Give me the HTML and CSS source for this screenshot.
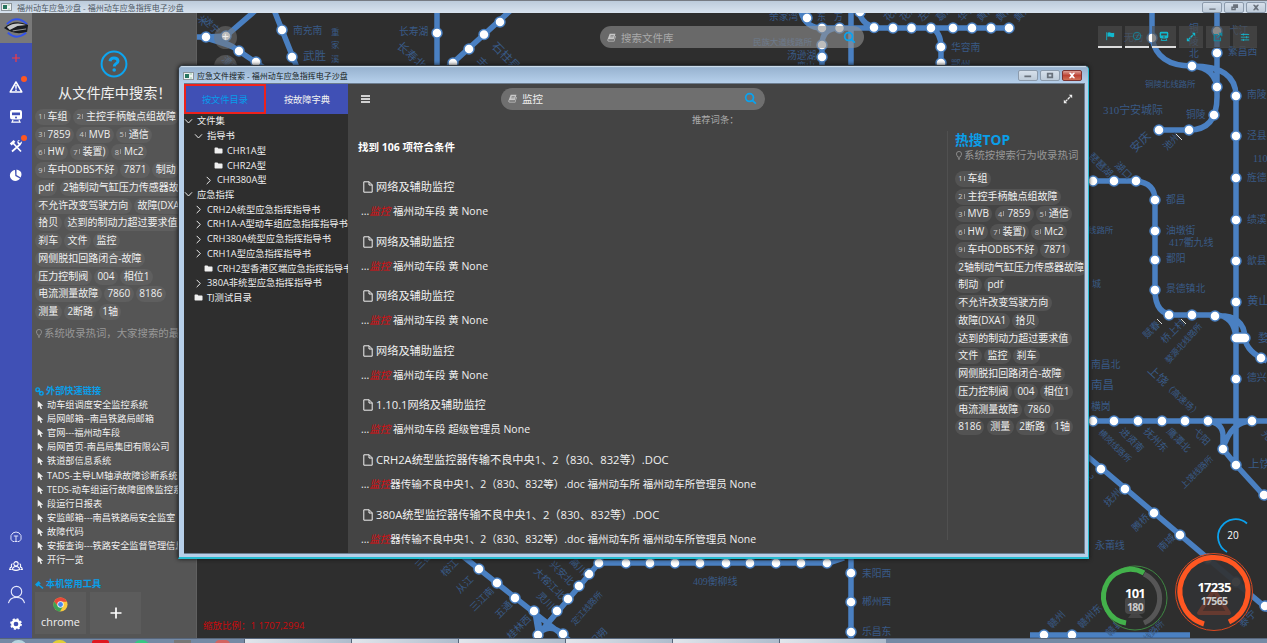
FILE: index.html
```html
<!DOCTYPE html>
<html lang="en">
<head>
<meta charset="utf-8">
<title>福州动车应急沙盘</title>
<link rel="stylesheet" href="styles.css">
</head>
<body>
<svg class="defs" width="0" height="0">
  <symbol id="bulb" viewBox="0 0 10 12"><path d="M3.4 8.2C3.2 7 1.6 6 1.6 4a3.4 3.4 0 0 1 6.8 0c0 2-1.6 3-1.8 4.200zM3.600 9.800h2.800M4.200 11.300h1.600" fill="none" stroke="currentColor" stroke-width="1.100"/></symbol>
  <symbol id="doc" viewBox="0 0 10 12"><path d="M.8.8h5.400l3 3v7.400H.8zM6 .8V4h3.200" fill="none" stroke="currentColor" stroke-width="1"/></symbol>
  <symbol id="down" viewBox="0 0 10 8"><path d="M1 1.500l4 4.200 4-4.200" fill="none" stroke="currentColor" stroke-width="1.100"/></symbol>
  <symbol id="right" viewBox="0 0 8 10"><path d="M2 1l4 4-4 4" fill="none" stroke="currentColor" stroke-width="1.100"/></symbol>
  <symbol id="folder" viewBox="0 0 10 8"><path d="M.5 1.500q0-.8.8-.8h2.500l1 1.100h4q.8 0 .8.8v3.900q0 .8-.8.8H1.300q-.8 0-.8-.8z" fill="currentColor"/></symbol>
  <symbol id="cursor" viewBox="0 0 8 11"><path d="M.8.5v8.200l2-1.800 1.500 3.400 1.500-.7-1.500-3.200h2.900z" fill="currentColor"/></symbol>
  <symbol id="glass" viewBox="0 0 14 14"><g fill="none" stroke="currentColor" stroke-width="1.900"><circle cx="6" cy="6" r="4.200"/><path d="M9 9l3.800 3.500"/></g></symbol>
  <symbol id="book" viewBox="0 0 10 10"><path d="M3 .8h6.400L7.500 7H1.500q-.8 1.300.4 1.500h5.700l1.600-5.200.7.400-1.800 5.800H1.500Q0 9 .6 7.200z" fill="currentColor"/><path d="M4 2.800h3.500M3.600 4.300h3.500" stroke="#6d6d6d" stroke-width=".7"/></symbol>
  <symbol id="expand" viewBox="0 0 12 12"><path d="M3 9l6-6" stroke="currentColor" stroke-width="1.600" stroke-dasharray="3.200 .7"/><path d="M7 1h4v4zM1 7v4h4z" fill="currentColor"/></symbol>
  <symbol id="app" viewBox="0 0 11 8"><rect x=".5" y=".5" width="10" height="7" fill="#eef2f2" stroke="#8c969d"/><path d="M2 2h4v4H2z" fill="#27755f"/><path d="M6.500 2h2.500M7 6h2" stroke="#9ca"/></symbol>
  <symbol id="train" viewBox="0 0 14 14"><path d="M3 1h8q2 0 2 2v5q0 2.500-2.500 2.500h-7Q1 10.500 1 8V3q0-2 2-2z" fill="currentColor"/><path d="M3 3.500h8v2.700H3z" fill="var(--hole,#4050b5)"/><circle cx="7" cy="8.400" r="1" fill="var(--hole,#4050b5)"/><path d="M4 11l-1 2.200h8L10 11" fill="none" stroke="currentColor" stroke-width="1.200"/></symbol>
</svg>

<header class="titlebar">
  <svg class="app-icon"><use href="#app"/></svg>
  <span>福州动车应急沙盘 - 福州动车应急指挥电子沙盘</span>
  <div class="win-btns">
    <svg viewBox="0 0 20 10"><path d="M7 6h7v1.500H7z"/></svg>
    <svg viewBox="0 0 20 10"><path d="M9 1.500h5.500v4H12V8H7V4h2zM8.500 5.500v1h2v-1z"/></svg>
    <svg viewBox="0 0 20 10"><path d="M6.500 2h2.300l1.200 1.300L11.200 2h2.300l-2.300 3 2.300 3h-2.300L10 6.700 8.800 8H6.500l2.300-3z"/></svg>
  </div>
</header>

<main class="desk">
  <nav class="rail">
    <div class="logo"><svg viewBox="0 0 28 22"><path d="M4 7Q14-3 25 7M5 16q9 8 19 0" fill="none" stroke="#3454ea" stroke-width="2"/><path d="M1 11Q12 1 26 8l-1 7q-13 4-24-4z" fill="#191c20"/><path d="M4 10Q13 4 24 8l-9 1-8 4z" fill="#c5c7c8"/><path d="M10 14l14-2" stroke="#999"/></svg></div>
    <div class="slot"><svg viewBox="0 0 14 14"><path d="M7 3v8M3 7h8" stroke="#f33b45" stroke-width="1.200"/></svg></div>
    <div class="slot"><svg viewBox="0 0 14 14"><path d="M7 2L1.200 12h11.600z" fill="none" stroke="#fff" stroke-width="1.500" stroke-linejoin="round"/><path d="M7 5v3.800M7 9.500v1.400" stroke="#fff" stroke-width="1.500"/></svg><i class="dot"></i></div>
    <div class="slot"><svg><use href="#train"/></svg></div>
    <div class="slot"><svg viewBox="0 0 14 14"><path d="M4 4l8 8.500M11.500 5L3 12.500" stroke="#fff" stroke-width="1.700"/><path d="M.8 4.500L4.600 1l1.800 1.800-3.800 3.600z" fill="#fff"/><path d="M12.800 2.200l-2 2-1.600-1.600 1.700-1.600Q8.500.6 8.300 3q.2 2.800 2.700 2.700 2.300-.7 1.800-3.500z" fill="#fff"/></svg><i class="dot"></i></div>
    <div class="slot"><svg viewBox="0 0 14 14"><path d="M6 2a5.500 5.500 0 1 0 5 8.500L6.300 8z" fill="#fff"/><path d="M7.500 1.500V7l4.200 2.500Q14.500 3 7.500 1.500z" fill="#fff"/></svg></div>
    <div class="spacer"></div>
    <div class="slot low"><svg viewBox="0 0 14 14"><path d="M5 11.500H3.800Q1 10 2 5.500 3.500 2 7 2t5 3.500q1 4.500-1.800 6H9M4.800 6h4.400M7 6v5M5.500 11.500h3" fill="none" stroke="#dfe2fb"/></svg></div>
    <div class="slot low"><svg viewBox="0 0 16 14"><g fill="none" stroke="#fff" stroke-width="1.200"><circle cx="8" cy="4.500" r="2.500"/><path d="M4 11q0-3.500 4-3.500t4 3.500q-4 2-8 0zM4 4.500Q2 5 3 8q-2 .5-2.300 3H3M12 4.500q2 .5 1 3.500 2 .5 2.300 3H13"/></g></svg></div>
    <div class="slot low"><svg class="big" viewBox="0 0 20 20"><g fill="none" stroke="#e5e7fb" stroke-width="1.200"><circle cx="10" cy="7" r="5.500"/><path d="M1.500 19q1.500-6 8.500-6t8.500 6"/></g></svg></div>
    <div class="slot low"><svg viewBox="0 0 14 14"><circle cx="7" cy="7" r="3.600" fill="none" stroke="#fff" stroke-width="2.500"/><circle cx="7" cy="7" r="5" fill="none" stroke="#fff" stroke-width="1.800" stroke-dasharray="2 1.930"/></svg></div>
  </nav>

  <aside class="side">
    <div class="ask"><svg viewBox="0 0 28 28"><circle cx="14" cy="14" r="12.400" fill="none" stroke="#0da5f0" stroke-width="2"/><path d="M10 11.200q.4-3.200 4-3.200t4 2.900q0 1.800-2 2.900-1.700.9-1.700 2.700" fill="none" stroke="#0da5f0" stroke-width="3"/><circle cx="14.200" cy="20" r="1.800" fill="#0da5f0"/></svg></div>
    <h1>从文件库中搜索！</h1>
    <div class="tags">
      <p><b><i>1</i>车组</b><b><i>2</i>主控手柄触点组故障</b></p>
      <p><b><i>3</i>7859</b><b><i>4</i>MVB</b><b><i>5</i>通信</b></p>
      <p><b><i>6</i>HW</b><b><i>7</i>装置)</b><b><i>8</i>Mc2</b></p>
      <p><b><i>9</i>车中ODBS不好</b><b>7871</b><b>制动</b></p>
      <p><b>pdf</b><b>2轴制动气缸压力传感器故障</b></p>
      <p><b>不允许改变驾驶方向</b><b>故障(DXA1</b></p>
      <p><b>拾贝</b><b>达到的制动力超过要求值</b></p>
      <p><b>刹车</b><b>文件</b><b>监控</b></p>
      <p><b>网侧脱扣回路闭合-故障</b></p>
      <p><b>压力控制阀</b><b>004</b><b>相位1</b></p>
      <p><b>电流测量故障</b><b>7860</b><b>8186</b></p>
      <p><b>测量</b><b>2断路</b><b>1轴</b></p>
    </div>
    <div class="hint"><svg><use href="#bulb"/></svg>系统收录热词，大家搜索的最多</div>
    <h2 class="links-title"><svg viewBox="0 0 10 10"><g fill="none" stroke="currentColor" stroke-width="1.600"><circle cx="3" cy="3" r="2"/><circle cx="7" cy="7" r="2"/><path d="M3.500 3.500l3 3"/></g></svg>外部快速链接</h2>
    <ul class="links">
      <li><svg><use href="#cursor"/></svg>动车组调度安全监控系统</li>
      <li><svg><use href="#cursor"/></svg>局网邮箱--南昌铁路局邮箱</li>
      <li><svg><use href="#cursor"/></svg>官网---福州动车段</li>
      <li><svg><use href="#cursor"/></svg>局网首页-南昌局集团有限公司</li>
      <li><svg><use href="#cursor"/></svg>铁道部信息系统</li>
      <li><svg><use href="#cursor"/></svg>TADS-主导LM轴承故障诊断系统</li>
      <li><svg><use href="#cursor"/></svg>TEDS-动车组运行故障图像监控系</li>
      <li><svg><use href="#cursor"/></svg>段运行日报表</li>
      <li><svg><use href="#cursor"/></svg>安监邮箱---南昌铁路局安全监室</li>
      <li><svg><use href="#cursor"/></svg>故障代码</li>
      <li><svg><use href="#cursor"/></svg>安报查询---铁路安全监督管理信息</li>
      <li><svg><use href="#cursor"/></svg>开行一览</li>
    </ul>
    <h2 class="tools-title"><svg viewBox="0 0 10 10"><path d="M0 5l4-4 2.500 3L4.800 5l4.700 3.500L8.300 10 4 6.200 2.500 7.500z" fill="currentColor"/></svg>本机常用工具</h2>
    <div class="tiles">
      <div class="tile"><svg viewBox="0 0 16 16"><circle cx="8" cy="8" r="7.500" fill="#fbc93d"/><path d="M1.200 4.700A7.500 7.500 0 0 1 14.800 5H8L5 9.500z" fill="#e8473a"/><path d="M1.300 4.700Q-1 9 2 12.500q2 2.800 5.500 3L10.500 10 5 9.500z" fill="#3da255"/><circle cx="8" cy="8" r="3.400" fill="#f5f5f5"/><circle cx="8" cy="8" r="2.600" fill="#4688ee"/></svg><span>chrome</span></div>
      <div class="tile"><svg class="plus" viewBox="0 0 12 12"><path d="M6 .5v11M.5 6h11" stroke="#fff" stroke-width="1.700"/></svg></div>
    </div>
  </aside>

  <section class="map">
    <svg class="lines" viewBox="197 13 1070 625">
      <defs>
        <path id="stations" d="M206 37h0M226 36h0M239 51h0M256 62h0M282 30h0M292 57h0M437 33h0M500 22h0M484 34.500h0M469 49h0M453 63h0M807 18h0M822 28h0M839.500 28h0M822 45h0M822 57h0M860 12h0M874 27.500h0M893 28h0M911.500 28h0M931 28h0M953 28h0M972 28h0M991 28h0M1009 28h0M941 47h0M941 63h0M1152 38h0M1217 31h0M1217 53h0M1192 66h0M1217 87h0M1236 96h0M1214 115h0M1189 130h0M1159 130h0M1236 136h0M1236 178h0M1093 181h0M1114 181h0M1136 181h0M1155 200h0M1155 231h0M1155 260h0M1155 290h0M1169 315h0M1192 315h0M1215 316h0M1236 220h0M1236 261h0M1236 302h0M1236 338h9M1261 358h0M1093 421h0M1114 421h0M1138 421h0M1162 421h0M1185 421h0M1208 421h0M1252 421h0M1236 379h0M1223 449h0M1236 465h0M1264 495h0M1101 469h0M1125 489h0M1154 513h0M1180 535h0M1208 559h0M1236 582h0M1265 606h0M479 569h0M497 583h0M515 598h0M534 611h0M538 635h0M563 634h0M557 611h0M568 599h0M579 586h0M589 574h0M599 563h0M626 563h0M650 563h0M675 563h0M700 563h0M726 563h0M750 563h0M776 563h0M801 563h0M827 563h0M851 573h0M851 602h0M851 632h0M1044 635h0M1072 635h0"/>
      </defs>
      <path class="track" d="M197 37h9l20-1L256 10M206 37q20 4 33 14l34 23M274 10l28 70M437 10v70M511 10L445 70M800 8q4 20 22 20h24M822 80V45q0-17 17-17h170M851 10v60M858 8q3 18 20 20M931 28q10 4 10 19v30M1152 10v28q5 28 40 28 44 0 44 30v369l31 34M1217 10v87q0 33-28 33h-30M1192 66q25 2 25 25M1080 181h56q19 2 19 19v90q0 25 20 25h40q19 0 21 23M1215 316q30-2 30 23 2 13 22 22M1080 421h187M1208 421q15 2 15 15v13l13 16M1223 449q8-28 29-28M1080 450l191 162M455 550l115 91M538 640q4-18-4-29M563 634q-15-12-25 1M538 635l61-72h230l15-5M851 555v83M1030 635h160"/>
      <path class="track inner" d="M200 37q18 5 34 11M534 611l4 24 19-24"/>
      <use href="#stations" class="halo"/><use href="#stations" class="stop"/>
      <g class="names">
        <text x="293" y="34">南充南</text><text x="303" y="60" class="l">武胜</text><text x="399" y="35">长寿湖</text><text transform="translate(202 21) rotate(45)">遂宁</text><text transform="translate(197 18) rotate(60)">米</text>
        <g class="kai"><text x="331" y="35">重</text><text x="331" y="48">家</text><text x="331" y="62">溪</text></g>
        <text transform="translate(396 47) rotate(42)" class="l">长寿北</text><text transform="translate(491 47) rotate(45)" class="l">石柱县</text><text transform="translate(475 62) rotate(45)" class="l">丰都</text><text transform="translate(221 60) rotate(45)">潼南</text>
        <text x="769" y="20">余家湾</text><text x="817" y="20" class="s">东</text><text x="834" y="20" class="s">方</text><text x="753" y="45" class="kai">民族大道线路所</text><text x="787" y="59">汤逊湖</text><text x="797" y="69" class="s">鹿山</text>
        <text transform="translate(888 22) rotate(-45)">花山</text><text transform="translate(904 22) rotate(-45)">花湖</text><text transform="translate(922 22) rotate(-45)">左岭</text><text transform="translate(940 22) rotate(-45)">葛店</text><text transform="translate(962 22) rotate(-45)">华容</text><text transform="translate(981 22) rotate(-45)">黄冈</text><text transform="translate(1000 22) rotate(-45)">黄冈西</text><text transform="translate(1018 22) rotate(-45)">黄州</text>
        <text x="951" y="51">华容南</text><text x="951" y="68">鄂州</text>
        <text x="1124" y="41">无为</text><text x="1189" y="32">铜</text><text x="1189" y="45">陵</text><text x="1189" y="57">北</text><text x="1229" y="34">弋江</text><text x="1228" y="55">繁昌西</text><text x="1145" y="87" class="kai">铜陵北线路所</text><text x="1103" y="114" class="kai xl">310宁安城际</text><text x="1186" y="118">铜陵</text><text x="1247" y="98">南陵</text><text x="1247" y="139">泾县</text><text x="1253" y="162" class="kai l">110</text><text x="1247" y="181">旌德</text>
        <text transform="translate(1135 153) rotate(-45)" class="l">安庆</text><text transform="translate(1167 151) rotate(-45)">池州</text><text transform="translate(1088 157) rotate(45)">琵琶湖</text><text transform="translate(1114 166) rotate(45)">湖口</text>
        <text x="1166" y="203">都昌</text><text x="1166" y="234">油墩街</text><text x="1169" y="246" class="kai l">417衢九线</text><text x="1166" y="262">鄱阳</text><text x="1166" y="292">景德镇北</text><text x="1088" y="233" class="kai">线路所</text><text x="1092" y="287" class="s">城</text><text x="1247" y="223">绩溪</text><text x="1247" y="264">歙县</text><text x="1247" y="305" class="l">黄山</text><text x="1258" y="342" class="l">婺</text>
        <text transform="translate(1147 339) rotate(-45)">赋春</text><text transform="translate(1165 344) rotate(-45)">桥上村</text><text transform="translate(1169 364) rotate(-48)" class="kai">婺源北线路所</text>
        <text x="1091" y="368">南昌北</text><text x="1091" y="389" class="l">南昌</text><text x="1091" y="410">横岗</text><text transform="translate(1147 371) rotate(43)" class="l">上饶<tspan class="n">（高速场）</tspan></text><text x="1247" y="381">德兴</text>
        <text transform="translate(1098 433) rotate(45)" class="kai">横岗线路所</text><text transform="translate(1119 432) rotate(45)">进贤南</text><text transform="translate(1143 432) rotate(45)">抚州东</text><text transform="translate(1166 432) rotate(45)">鹰潭北</text><text transform="translate(1192 432) rotate(45)">弋阳</text><text transform="translate(1184 489) rotate(-45)" class="kai">上饶线路所</text><text x="1248" y="468" class="l">上饶</text><text transform="translate(1261 434) rotate(45)">光</text>
        <text transform="translate(1108 507) rotate(-45)">抚州</text><text transform="translate(1136 532) rotate(-45)">腾桥</text><text transform="translate(1162 552) rotate(-45)">南城</text><text x="1095" y="549" class="kai l">永莆线</text><text transform="translate(1243 628) rotate(-45)">泰宁</text><text transform="translate(1087 483) rotate(-45)">北</text>
        <text transform="translate(1052 629) rotate(-45)">赣州</text><text transform="translate(1082 629) rotate(-45)">赣州东</text><text transform="translate(1110 637) rotate(-45)">赣县</text><text transform="translate(1147 642) rotate(-45)" class="kai">线路所</text>
        <text x="862" y="577">耒阳西</text><text x="862" y="605">郴州西</text><text x="862" y="635">乐昌东</text><text x="693" y="585" class="kai l">409衡柳线</text>
        <text transform="translate(419 570) rotate(-45)">三都</text><text transform="translate(445 577) rotate(-45)">榕江</text><text transform="translate(460 594) rotate(-45)">从江</text><text transform="translate(474 612) rotate(-45)">三江南</text><text transform="translate(499 619) rotate(-45)">五通</text><text transform="translate(511 640) rotate(-45)">桂林西</text><text transform="translate(569 562) rotate(45)">高川</text><text transform="translate(549 565) rotate(45)">兴安北</text><text transform="translate(533 572) rotate(45)">大榕江北</text><text transform="translate(536 596) rotate(45)">灵川</text><text transform="translate(575 626) rotate(-48)" class="kai">定江线路所</text><text transform="translate(594 646) rotate(-45)">阳朔</text>
      </g>
      <path d="M1176 134l6 6M1157 319l5 5M1181 319l5 5" stroke="#ddd"/>
      <text x="203" y="629" class="scale">缩放比例：1 1707,2994</text>
    </svg>

    <div class="zoom-pad"><i>+</i><i>−</i></div>
    <div class="field outer"><svg class="bk"><use href="#book"/></svg><span>搜索文件库</span><svg class="gl"><use href="#glass"/></svg></div>
    <div class="toolbar">
      <div class="on"><svg viewBox="0 0 12 12"><path d="M2 1.500v9.500" stroke="currentColor"/><path d="M3 2q2-1 4 0t4 0v5Q9 8 7 7T3 7z" fill="currentColor"/></svg></div>
      <div class="on dim"><svg viewBox="0 0 12 12"><g fill="none" stroke="currentColor"><circle cx="6" cy="6" r="4.500"/><path d="M5 8.500L8 4M4 10h4"/></g></svg></div>
      <div class="on"><svg class="tr"><use href="#train"/></svg></div>
      <div><svg><use href="#expand"/></svg></div>
      <div class="dim"><svg viewBox="0 0 12 12"><path d="M9 6.500V10.500H1.500V3H6M5 7l5-5M7 1.500h3.500V5" fill="none" stroke="currentColor" stroke-width="1.400"/></svg></div>
      <div><svg viewBox="0 0 12 12"><path d="M1 3h10M1 6.200h10M1 9.500h10M4 1.700v2.600M8 5v2.600M4 8.200v2.600" fill="none" stroke="currentColor"/></svg></div>
    </div>
    <svg class="dials" viewBox="1095 510 165 125">
      <path d="M1247 523.500A17.500 17.500 0 1 0 1227 552" fill="none" stroke="#0ba2ee" stroke-width="1.800"/>
      <text x="1233" y="539" class="d20">20</text>
      <circle cx="1135" cy="598" r="32" fill="#2d2e2d" fill-opacity=".92" stroke="#3f8843"/><path d="M1144 623A27 27 0 0 0 1144 574" fill="none" stroke="#565656" stroke-width="5"/><path d="M1126 623A27 27 0 1 1 1144 573" fill="none" stroke="#43b14b" stroke-width="5"/>
      <rect x="1125" y="597" width="20" height="17" rx="4" fill="#484848"/><path d="M1131 614l-3 4h15l-4-4" fill="#444"/>
      <text x="1135" y="598" class="big">101</text><text x="1135" y="611" class="small">180</text>
      <circle cx="1214" cy="592" r="38.500" fill="#323335" fill-opacity=".94" stroke="#d84820"/><path d="M1204 624A34 34 0 1 1 1229 622" fill="none" stroke="#ff5722" stroke-width="5"/>
      <path d="M1214 590l15 23h-30z" fill="#46312c" stroke="#653a30" stroke-width="4" stroke-linejoin="round"/>
      <text x="1214" y="592" class="big">17235</text><text x="1214" y="605" class="small">17565</text>
    </svg>
  </section>
</main>

<footer class="taskbar"><i class="orb"></i><i class="y"></i><i class="r"></i><i class="g"></i><i class="k"></i><i class="r small"></i><div class="tabs"><b></b><b></b><b></b><b></b><b></b><b></b></div><span></span></footer>

<section class="window">
  <header class="win-title">
    <svg class="app-icon"><use href="#app"/></svg>
    <span>应急文件搜索 - 福州动车应急指挥电子沙盘</span>
    <div class="win-btns">
      <svg viewBox="0 0 20 10"><path d="M6 5h7.500v2H6z"/></svg>
      <svg viewBox="0 0 20 10"><path d="M6.500 2h7v6h-7zM8.500 4v2h3V4z" fill-rule="evenodd"/></svg>
      <svg class="close" viewBox="0 0 20 10"><path d="M6.500 2h2.300l1.200 1.300L11.200 2h2.300l-2.300 3 2.300 3h-2.300L10 6.700 8.800 8H6.500l2.300-3z"/></svg>
    </div>
  </header>
  <div class="win-body">
    <div class="tree">
      <div class="tree-tabs"><span class="active">按文件目录</span><span>按故障字典</span></div>
      <ul>
        <li><svg class="dn"><use href="#down"/></svg>文件集</li>
        <li class="l1"><svg class="dn"><use href="#down"/></svg>指导书</li>
        <li class="l3"><svg class="fd"><use href="#folder"/></svg>CHR1A型</li>
        <li class="l3"><svg class="fd"><use href="#folder"/></svg>CHR2A型</li>
        <li class="l2"><svg class="rt"><use href="#right"/></svg>CHR380A型</li>
        <li><svg class="dn"><use href="#down"/></svg>应急指挥</li>
        <li class="l1"><svg class="rt"><use href="#right"/></svg>CRH2A统型应急指挥指导书</li>
        <li class="l1"><svg class="rt"><use href="#right"/></svg>CRH1A-A型动车组应急指挥指导书</li>
        <li class="l1"><svg class="rt"><use href="#right"/></svg>CRH380A统型应急指挥指导书</li>
        <li class="l1"><svg class="rt"><use href="#right"/></svg>CRH1A型应急指挥指导书</li>
        <li class="l2"><svg class="fd"><use href="#folder"/></svg>CRH2型香港区端应急指挥指导书</li>
        <li class="l1"><svg class="rt"><use href="#right"/></svg>380A非统型应急指挥指导书</li>
        <li class="l1"><svg class="fd"><use href="#folder"/></svg>TJ测试目录</li>
      </ul>
    </div>
    <div class="content">
      <div class="searchbar">
        <svg class="menu" viewBox="0 0 9 8"><path d="M0 1h9M0 4h9M0 7h9" stroke="#fff" stroke-width="1.300"/></svg>
        <div class="field"><svg class="bk"><use href="#book"/></svg><span>监控</span><svg class="gl"><use href="#glass"/></svg></div>
        <svg class="exp"><use href="#expand"/></svg>
      </div>
      <div class="suggest">推荐词条：</div>
      <div class="columns">
        <div class="results">
          <h3>找到 106 项符合条件</h3>
          <article><h4><svg><use href="#doc"/></svg>网络及辅助监控</h4><p>...<em>监控</em> 福州动车段 黄 None</p></article>
          <article><h4><svg><use href="#doc"/></svg>网络及辅助监控</h4><p>...<em>监控</em> 福州动车段 黄 None</p></article>
          <article><h4><svg><use href="#doc"/></svg>网络及辅助监控</h4><p>...<em>监控</em> 福州动车段 黄 None</p></article>
          <article><h4><svg><use href="#doc"/></svg>网络及辅助监控</h4><p>...<em>监控</em> 福州动车段 黄 None</p></article>
          <article><h4><svg><use href="#doc"/></svg>1.10.1网络及辅助监控</h4><p>...<em>监控</em> 福州动车段 超级管理员 None</p></article>
          <article><h4><svg><use href="#doc"/></svg>CRH2A统型监控器传输不良中央1、2（830、832等）.DOC</h4><p>...<em>监控</em>器传输不良中央1、2（830、832等）.doc 福州动车所 福州动车所管理员 None</p></article>
          <article><h4><svg><use href="#doc"/></svg>380A统型监控器传输不良中央1、2（830、832等）.DOC</h4><p>...<em>监控</em>器传输不良中央1、2（830、832等）.doc 福州动车所 福州动车所管理员 None</p></article>
        </div>
        <div class="hot">
          <h2>热搜TOP</h2>
          <div class="hint"><svg><use href="#bulb"/></svg>系统按搜索行为收录热词</div>
          <div class="tags">
            <p><b><i>1</i>车组</b></p>
            <p><b><i>2</i>主控手柄触点组故障</b></p>
            <p><b><i>3</i>MVB</b><b><i>4</i>7859</b><b><i>5</i>通信</b></p>
            <p><b><i>6</i>HW</b><b><i>7</i>装置)</b><b><i>8</i>Mc2</b></p>
            <p><b><i>9</i>车中ODBS不好</b><b>7871</b></p>
            <p><b>2轴制动气缸压力传感器故障</b></p>
            <p><b>制动</b><b>pdf</b></p>
            <p><b>不允许改变驾驶方向</b></p>
            <p><b>故障(DXA1</b><b>拾贝</b></p>
            <p><b>达到的制动力超过要求值</b></p>
            <p><b>文件</b><b>监控</b><b>刹车</b></p>
            <p><b>网侧脱扣回路闭合-故障</b></p>
            <p><b>压力控制阀</b><b>004</b><b>相位1</b></p>
            <p><b>电流测量故障</b><b>7860</b></p>
            <p><b>8186</b><b>测量</b><b>2断路</b><b>1轴</b></p>
          </div>
        </div>
      </div>
    </div>
  </div>
</section>
</body>
</html>
```
FILE: styles.css
```css
* { box-sizing: border-box; margin: 0; padding: 0; }
body {
  width: 1267px; height: 643px; overflow: hidden; position: relative;
  display: flex; flex-direction: column;
  font-family: "Open Sans", "Noto Sans CJK SC", sans-serif;
  color: #f0f0f0; background: #2e2e2e;
}
svg { display: block; flex: none; }
.defs { position: absolute; }
ul { list-style: none; }
i { font-style: normal; }

/* window chrome */
.titlebar {
  height: 13px; flex: none; display: flex; align-items: center; padding-left: 1px;
  border-top: 1px solid #767b83; background: linear-gradient(#bccbdb, #d8e3ef);
  color: #4a5460; font-size: 8px; line-height: 11px;
}
.titlebar span { margin-left: 5px; white-space: pre; }
.app-icon { width: 11px; height: 8px; }
.win-btns { display: flex; gap: 2px; margin-left: auto; padding-right: 1px; }
.win-btns svg { width: 20px; height: 11px; border: 1px solid #8c9bac; border-radius: 2px; fill: #69717b; background: linear-gradient(#d6e0eb, #bfccda); }

.desk { flex: 1; display: flex; min-height: 0; }
.rail { width: 32px; flex: none; background: #4050b5; display: flex; flex-direction: column; }
.logo { height: 30px; background: #797979; display: grid; place-items: center; }
.logo svg { width: 27px; height: 22px; }
.slot { height: 29.300px; display: grid; place-items: center; position: relative; color: #fff; }
.slot.low { height: 29px; }
.slot svg { width: 14px; height: 14px; }
.slot svg.big { width: 19px; height: 19px; }
.dot { position: absolute; left: 21px; top: 4px; width: 6px; height: 6px; border-radius: 50%; background: #ff5722; }
.spacer { flex: 1; }

.side { width: 165px; flex: none; background: #555; padding: 37px 0 0 3px; overflow: hidden; border-right: 1px solid #606060; }
.ask { width: 158px; display: flex; justify-content: center; }
.ask svg { width: 28px; height: 28px; }
h1 { font-size: 14.200px; font-weight: 400; line-height: 20px; height: 30px; padding: 5px 0 0 23px; white-space: nowrap; }
.tags p { display: flex; height: 17.750px; gap: 2.500px; align-items: center; white-space: nowrap; }
.tags b { font-weight: 400; font-size: 10px; height: 16px; line-height: 15px; padding: 0 3.300px; border-radius: 8px; background: #5f5f5f; }
.tags i { font-size: 7.500px; color: #ccc; margin-right: 3px; padding-right: 2px; position: relative; top: -.5px; background: linear-gradient(#999, #999) right center / 1px 5px no-repeat; }
.hint { display: flex; align-items: center; font-size: 10.400px; line-height: 16px; color: #989898; white-space: nowrap; gap: 1px; }
.hint svg { width: 8px; height: 9px; }
.side .hint { padding-top: 4px; }
.side h2 { display: flex; align-items: center; gap: 2px; font-size: 9.200px; line-height: 14px; color: #0a9ee8; white-space: nowrap; }
.side h2 svg { width: 9px; height: 9px; }
.links-title { margin-top: 43px; }
.links li { height: 14.120px; line-height: 14px; display: flex; align-items: center; gap: 3px; padding-left: 2px; font-size: 9.200px; white-space: nowrap; }
.links svg { width: 7px; height: 10px; }
.tools-title { margin-top: 10px; }
.tiles { display: flex; gap: 4px; margin-top: 1px; }
.tile { width: 51px; height: 42px; background: #5c5c5c; display: flex; flex-direction: column; align-items: center; justify-content: center; }
.tile svg { width: 15px; height: 15px; }
.tile svg.plus { width: 12px; height: 12px; }
.tile span { font-size: 10.800px; line-height: 15px; padding-top: 2px; }

/* map */
.map { flex: 1; position: relative; background: #2e2e2e; overflow: hidden; }
.lines { width: 1070px; height: 625px; }
.track { fill: none; stroke: #4a80c2; stroke-width: 5.500; stroke-linejoin: round; }
.track.inner { stroke-width: 4; }
.halo { fill: none; stroke: #4a80c2; stroke-width: 11.500; stroke-linecap: round; }
.stop { fill: none; stroke: #fff; stroke-width: 8.500; stroke-linecap: round; }
.names { fill: #395a86; font-size: 9.800px; }
.names .l { font-size: 11.500px; }
.names .s, .names .n { font-size: 9px; }
.names .kai { font-family: "Liberation Serif", "Noto Sans CJK SC", serif; font-size: 8.500px; letter-spacing: -.1px; }
.names .kai.l { font-size: 10px; }
.names .kai.xl { font-size: 11px; }
.scale { fill: #ca0a0c; font-size: 9.500px; }
.zoom-pad { position: absolute; left: 17px; top: 13px; display: flex; flex-direction: column; gap: 6px; }
.zoom-pad i { width: 23px; height: 23px; border-radius: 50%; background: rgba(120,120,120,.5); text-align: center; font-size: 12px; line-height: 22px; }
.field { display: flex; align-items: center; width: 264px; height: 22px; border-radius: 11px; background: #6f6f6f; padding: 0 8px 0 7px; font-size: 10.500px; }
.field .bk { width: 9px; height: 9px; color: #c8c8c8; }
.field span { margin-left: 5px; }
.field .gl { width: 13px; height: 13px; margin-left: auto; color: #0aa3ef; }
.field.outer { position: absolute; left: 403px; top: 13px; background: rgba(145,145,145,.6); color: #aaa; }
.toolbar { position: absolute; left: 901px; top: 13px; display: flex; gap: 3px; color: #12b9cf; }
.toolbar div { width: 24px; height: 22px; display: grid; place-items: center; background: rgba(75,75,75,.65); border-bottom: 1px solid #444; }
.toolbar .on { border-bottom: 2px solid #ddd; }
.toolbar .dim { color: #12899f; }
.toolbar svg { width: 10px; height: 10px; }
.toolbar .tr { --hole: #444; }
.dials { position: absolute; left: 898px; top: 497px; width: 165px; height: 125px; text-anchor: middle; fill: #fff; }
.d20 { font-size: 10px; }
.dials .big { font: bold 13px "Open Sans"; letter-spacing: -.8px; }
.dials .small { font: bold 10.500px "Open Sans"; letter-spacing: -.7px; fill: #ccc; }

.taskbar { height: 5px; flex: none; display: flex; border-top: 1px solid #56657a; background: #758aa5; padding-left: 10px; overflow: hidden; }
.taskbar i { width: 17px; height: 9px; border-radius: 8px 8px 0 0; margin-right: 24px; margin-top: 1px; background: #b5d4df; }
.taskbar .y { background: #e1cf35; } .taskbar .r { background: #df1820; border-radius: 2px; } .taskbar .g { background: #35c783; } .taskbar .k { background: #777; border-radius: 0; } .taskbar .small { background: #d26360; border-radius: 8px; width: 15px; margin-right: 14px; }
.tabs { display: flex; } .tabs b { width: 107px; border-left: 1px solid #56657a; background: linear-gradient(90deg, #e2e6ec, #aebccc); }

/* search window */
.window {
  position: absolute; left: 178px; top: 65px; width: 911px; height: 494px;
  border: 1px solid #343b42; border-right: 1.500px solid #25bbd0; border-bottom: 2px solid #25bbd0; border-radius: 5px 5px 0 0;
  background: #b7cfe9; padding: 0 3px 3px 5px; display: flex; flex-direction: column;
  box-shadow: 0 0 4px #111;
}
.win-title { height: 17px; flex: none; margin: 0 -3px 0 -5px; padding: 2px 5px 0 4px; display: flex; align-items: center; background: linear-gradient(#e1ecf5, #98b3d0 10%, #b6d0eb); border-radius: 4px 4px 0 0; color: #151b20; font-size: 8px; line-height: 12px; }
.win-title span { margin-left: 3px; white-space: pre; }
.win-title .close { background: linear-gradient(#dda096, #bd4334 50%, #cf7056); fill: #fff; border-color: #7b3432; }
.win-body { flex: 1; display: flex; min-height: 0; border: 1px solid #6d7d8f; border-width: 1px 1px 1px 0; }
.tree { width: 164px; flex: none; background: #2e2e2e; overflow: hidden; }
.tree-tabs { height: 30px; display: flex; background: #4050b5; font-size: 9.250px; }
.tree-tabs span { width: 82px; display: grid; place-items: center; border: 0 solid; }
.tree-tabs .active { border: 2px solid #ed211c; color: #069ceb; }
.tree li { display: flex; align-items: center; height: 14.720px; line-height: 14px; font-size: 9.300px; white-space: nowrap; gap: 4px; }
.tree .l1 { padding-left: 10px; } .tree .l2 { padding-left: 20px; } .tree .l3 { padding-left: 30px; }
.dn { width: 9px; height: 7px; } .rt { width: 9px; height: 9px; } .fd { width: 9px; height: 7px; }
.content { flex: 1; background: #444; display: flex; flex-direction: column; min-width: 0; overflow: hidden; }
.searchbar { display: flex; align-items: center; height: 29px; flex: none; padding-left: 13px; }
.menu { width: 9px; height: 8px; }
.searchbar .field { margin-left: 131px; }
.exp { width: 10px; height: 10px; margin-left: 298px; }
.suggest { padding-left: 344px; font-size: 9.300px; line-height: 14px; color: #aaa; height: 18px; flex: none; }
.columns { flex: 1; display: flex; min-height: 0; }
.results { width: 600px; flex: none; padding-left: 10px; height: 409px; border-right: 1px solid #505050; }
.results h3 { font-size: 10.500px; line-height: 32px; height: 44px; color: #fff; }
.results article { height: 54.600px; padding-left: 3px; white-space: nowrap; }
.results h4 { display: flex; align-items: center; gap: 3px; font-size: 11.200px; font-weight: 400; line-height: 24px; height: 24px; padding-left: 2px; }
.results h4 svg { width: 10px; height: 12px; }
.results article p { font-size: 10.500px; line-height: 25px; }
.results em { color: #dc0b10; }
.hot { padding: 0 0 0 7px; flex: 1; min-width: 0; overflow: hidden; }
.hot h2 { font-size: 13.800px; line-height: 17px; color: #0a9ee8; }
.hot .hint { line-height: 15px; height: 15px; }
.hot .tags { margin-top: 7px; }
.hot .tags b { background: #535353; }
```
